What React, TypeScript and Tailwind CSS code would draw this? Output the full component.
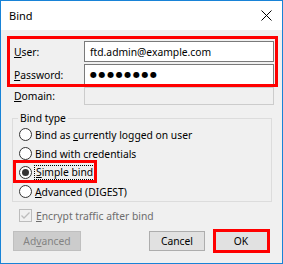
import React from 'react';

const Radio = ({ checked }: { checked?: boolean }) => (
  <span className="flex h-[13px] w-[13px] shrink-0 items-center justify-center rounded-full border border-[#333333] bg-white">
    {checked && <span className="h-[7px] w-[7px] rounded-full bg-[#333333]" />}
  </span>
);

const App: React.FC = () => {
  return (
    <div className="h-[264px] w-[283px] bg-white text-[10.3px] leading-[14px] text-black [font-family:'Noto_Sans','Open_Sans',sans-serif]">
      <div className="flex h-full flex-col border border-[#1883d7] bg-[#f0f0f0]">
        {/* Title bar */}
        <div className="flex h-[29px] shrink-0 items-center justify-between bg-white pl-[8px] pr-[10px]">
          <span className="text-[11px]">Bind</span>
          <svg width="11" height="11" viewBox="0 0 11 11" className="mr-[0px]">
            <path d="M0.5 0.5 L10.5 10.5 M10.5 0.5 L0.5 10.5" stroke="#000" strokeWidth="1" />
          </svg>
        </div>

        {/* Body */}
        <div className="relative flex flex-col">
          {/* Credentials */}
          <div className="relative flex flex-col gap-[2px] pl-[13px] pt-[11px]">
            <div className="flex items-center">
              <label className="w-[70px]"><u>U</u>ser:</label>
              <div className="flex h-[21px] w-[190px] items-center border border-[#7a7a7a] bg-white px-[5px]">
                ftd.admin@example.com
              </div>
            </div>
            <div className="flex items-center">
              <label className="w-[70px]"><u>P</u>assword:</label>
              <div className="flex h-[21px] w-[190px] items-center border border-[#7a7a7a] bg-white px-[5px] text-[8px] tracking-[1.6px] [font-family:'DejaVu_Sans',sans-serif]">
                ●●●●●●●●
              </div>
            </div>
            <span className="pointer-events-none absolute left-[6px] top-[6px] h-[51px] w-[271px] border-[3px] border-[#ff0000]" />
          </div>

          <div className="mt-[2px] flex items-center pl-[13px]">
            <label className="w-[70px]"><u>D</u>omain:</label>
            <div className="h-[18px] w-[190px] border border-[#cccccc] bg-[#f0f0f0]" />
          </div>

          {/* Bind type group */}
          <fieldset className="ml-[11px] mt-[6px] w-[260px] border border-[#dcdcdc] pb-[0px]">
            <legend className="ml-[5px] px-[2px]">Bind type</legend>
            <div className="flex flex-col pl-[6px]">
              <div className="flex h-[19px] items-center gap-[3px]">
                <Radio />
                <span>Bind as <u>c</u>urrently logged on user</span>
              </div>
              <div className="flex h-[19px] items-center gap-[3px]">
                <Radio />
                <span>Bind with credentials</span>
              </div>
              <div className="relative flex h-[19px] items-center gap-[2px]">
                <Radio checked />
                <span className="border border-dotted border-black px-[1px] leading-[13px]"><u>S</u>imple bind</span>
                <span className="pointer-events-none absolute left-[-6px] top-[-3px] h-[23px] w-[84px] border-[3px] border-[#ff0000]" />
              </div>
              <div className="flex h-[19px] items-center gap-[3px]">
                <Radio />
                <span><u>A</u>dvanced (DIGEST)</span>
              </div>
            </div>
          </fieldset>

          {/* Encrypt checkbox */}
          <div className="mt-[4px] flex h-[19px] items-center gap-[4px] pl-[18px] text-[#6d6d6d]">
            <span className="flex h-[13px] w-[13px] items-center justify-center border border-[#bcbcbc] bg-[#f0f0f0]">
              <svg width="11" height="11" viewBox="0 0 11 11">
                <path d="M1.5 5.5 L4 8 L9.5 2.5" fill="none" stroke="#bcbcbc" strokeWidth="1.3" />
              </svg>
            </span>
            <span><u>E</u>ncrypt traffic after bind</span>
          </div>

          {/* Buttons */}
          <div className="mt-[6px] flex items-center pl-[12px]">
            <button className="h-[20px] w-[68px] border border-[#bfbfbf] bg-[#cccccc] text-[#838383]">
              Ad<u>v</u>anced
            </button>
            <button className="ml-[68px] h-[20px] w-[56px] border border-[#adadad] bg-[#e1e1e1]">
              Cancel
            </button>
            <div className="relative ml-[8px]">
              <button className="h-[20px] w-[56px] border border-[#0078d7] bg-[#e1e1e1]">OK</button>
              <span className="pointer-events-none absolute left-[0px] top-[-2px] h-[24px] w-[57px] border-[3px] border-[#ff0000]" />
            </div>
          </div>
        </div>
      </div>
    </div>
  );
};

export default App;
